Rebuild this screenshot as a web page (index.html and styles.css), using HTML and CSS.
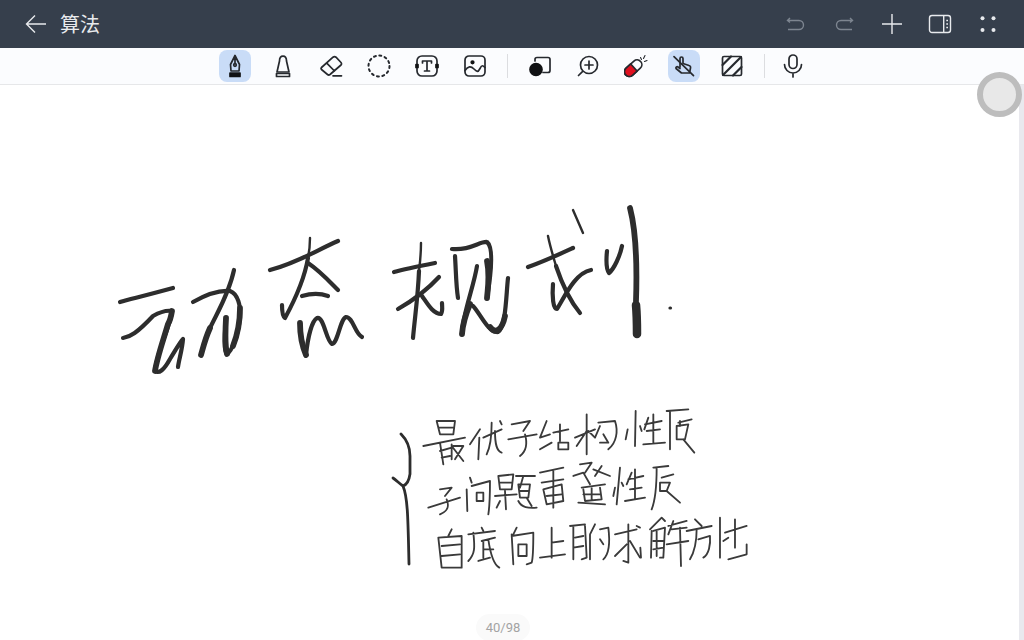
FILE: index.html
```html
<!DOCTYPE html>
<html lang="zh-CN">
<head>
<meta charset="utf-8">
<title>算法</title>
<link rel="stylesheet" href="styles.css">
</head>
<body>
<div class="app">
  <header class="topbar">
    <div class="top-left">
      <svg class="ic" viewBox="0 0 24 24"><path d="M3 12H22M11 3.500 2.500 12 11 20.500"/></svg>
      <span class="title">算法</span>
    </div>
    <div class="top-right">
      <svg class="ic dim" viewBox="0 0 24 24"><path d="M3.500 8.500H15a4.500 4.500 0 0 1 0 9H4M6 6 3.500 8.500 6 10.500"/></svg>
      <svg class="ic dim" viewBox="0 0 24 24"><path d="M20.500 8.500H9a4.500 4.500 0 0 0 0 9h11M18 6l2.500 2.500L18 10.500"/></svg>
      <svg class="ic" viewBox="0 0 24 24"><path d="M12 2V22M2 12H22"/></svg>
      <svg class="ic" viewBox="0 0 24 24"><rect x="1.500" y="3.500" width="21" height="17" rx="2.500"/><path d="M15.700 3.500V20.500M18.300 8.500H20M18.300 12H20M18.300 15.500H20"/></svg>
      <svg class="ic fill" viewBox="0 0 24 24"><circle cx="6.500" cy="6.300" r="2"/><circle cx="17.500" cy="6.300" r="2"/><circle cx="6.500" cy="18" r="2"/><circle cx="17.500" cy="18" r="2"/></svg>
    </div>
  </header>

  <nav class="toolbar">
    <span class="tool on"><svg class="ti" viewBox="0 0 24 24"><path d="M12 1.500 16.500 10.500 16 17H8L7.500 10.500ZM12 3V9"/><circle cx="12" cy="11" r="1.300"/><rect class="solid" x="7" y="19" width="10" height="3.500"/></svg></span>
    <span class="tool"><svg class="ti" viewBox="0 0 24 24"><path d="M8.500 7C8.500 .5 15.500 .5 15.500 7L18 18H6Z"/><path d="M5.500 19.500H18.500V22.500H5.500Z"/></svg></span>
    <span class="tool"><svg class="ti" viewBox="0 0 24 24"><path d="M2.500 13.500 14 3.200A2.500 2.500 0 0 1 17 3.200L22 8.500A2 2 0 0 1 22 11L11 20.500A2 2 0 0 1 8.500 20.500L2.500 15.500A1.500 1.500 0 0 1 2.500 13.500ZM7.500 8.800 15.500 17M14 21.800H22.500"/></svg></span>
    <span class="tool"><svg class="ti dotted" viewBox="0 0 24 24"><circle cx="12" cy="12" r="10.500"/></svg></span>
    <span class="tool"><svg class="ti" viewBox="0 0 24 24"><rect x="2" y="2" width="20" height="20" rx="5"/><path d="M7.500 9V7H16.500V9M12 7V17M9.500 17H14.500"/><path class="solid" d="M1 10.500H3V13.500H1ZM21 10.500H23V13.500H21Z"/></svg></span>
    <span class="tool"><svg class="ti" viewBox="0 0 24 24"><rect x="2" y="2" width="20" height="20" rx="4"/><circle class="solid" cx="9.500" cy="8.300" r="1.300"/><path d="M2 16.500C5 12 8 12 11 15S15 18.500 17 14.500 20 11.500 22 13.500"/></svg></span>
    <span class="sep"></span>
    <span class="tool"><svg class="ti" viewBox="0 0 24 24"><path d="M7 7V5.500A2 2 0 0 1 9 3.500H20A2 2 0 0 1 22 5.500V16.500A2 2 0 0 1 20 18.500H15"/><circle class="solid" cx="8" cy="15.500" r="6"/></svg></span>
    <span class="tool"><svg class="ti" viewBox="0 0 24 24"><circle cx="13" cy="11" r="8.500"/><path d="M13 7V15M9 11H17M6.700 17.300 2.500 21.500"/></svg></span>
    <span class="tool"><svg class="ti" viewBox="0 0 24 24"><g transform="rotate(-42 9 14)"><rect x="-1" y="9.500" width="20" height="9.500" rx="4.700"/><path class="red" d="M10 9.500H3.700A4.700 4.700 0 0 0 3.700 19H10Z"/></g><path class="thin" d="M16.500 3.500 17.500 5.500M21 1.500 19.500 4.500M23 6.500 20.500 7.500"/></svg></span>
    <span class="tool on"><svg class="ti" viewBox="0 0 24 24"><path d="M8 13V4.500A1.500 1.500 0 0 1 11 4.500V9.500L17 11.500A2 2 0 0 1 18.500 14L17.500 19H9.500L4 14.500A1.300 1.300 0 0 1 6 13L8 14.500"/><path d="M2 2.700 21.500 21.700"/></svg></span>
    <span class="tool"><svg class="ti" viewBox="0 0 24 24"><rect x="2.500" y="2.500" width="19" height="19" rx="1.500"/><path class="hatch" d="M2.500 11 11 2.500M3 21 21 3M13 21.500 21.500 13"/></svg></span>
    <span class="sep"></span>
    <span class="mic"><svg class="ti" viewBox="0 0 24 24"><rect x="8" y="1" width="8" height="13.500" rx="4"/><path d="M3.500 10.500A8.500 8.500 0 0 0 20.500 10.500M12 19V23"/></svg></span>
  </nav>

  <main class="canvas">
    <svg class="ink" viewBox="0 84 1024 556" role="img" aria-label="动态规划 手写笔记">
      <g class="big">
        <path d="M120 301C130 298 140 296 173 287"/>
        <path d="M123 337C130 336 137 332 153 315 160 311 166 309 172 310 171 323 157 350 155 370 159 373 164 369 170 358 175 350 180 341 183 338 182 350 179 358 178 366"/>
        <path d="M193 301C207 293 220 289 230 290 238 293 241 305 240 317 238 335 232 350 227 353 223 350 225 330 226 317"/>
        <path d="M234 269C229 293 217 312 210 327 205 338 203 347 201 354"/>
        <path d="M270 269C297 262 315 250 338 240"/>
        <path class="fine" d="M310 237C310 245 309 252 308 257"/>
        <path d="M308 257C305 275 297 295 285 317 282 315 282 309 282 304"/>
        <path d="M308 262C320 270 330 281 338 289"/>
        <path d="M302 295C312 292 320 292 328 295"/>
        <path d="M300 322C300 335 303 347 306 354 308 335 312 320 317 317 324 315 326 340 332 343 338 342 340 318 346 316 353 316 355 333 362 336"/>
        <path d="M394 271C405 268 420 265 435 262"/>
        <path class="fine" d="M421 242C421 252 420 262 419 270"/>
        <path d="M419 270C418 295 415 315 413 337"/>
        <path d="M398 308C412 300 428 288 439 276"/>
        <path d="M422 295C427 302 433 313 441 313 443 310 442 305 442 302"/>
        <path d="M452 248C470 250 480 240 487 241 492 245 493 262 487 297"/>
        <path d="M455 255C456 270 456 285 458 297"/>
        <path d="M477 265C474 285 462 315 462 333"/>
        <path d="M473 305C480 312 488 332 498 331 506 326 506 295 508 277"/>
        <path class="fine" d="M573 209 583 232"/>
        <path d="M528 266C545 260 560 253 573 247"/>
        <path class="fine" d="M548 235C550 245 553 255 556 265"/>
        <path d="M556 265C561 280 570 300 580 312"/>
        <path d="M591 269C575 272 565 295 557 308 553 308 552 295 553 283"/>
        <path d="M607 250C606 260 606 268 609 272 614 268 620 255 622 245"/>
        <path class="mid" d="M630 207C636 230 637 270 636 300"/>
        <path class="heavy" d="M636 304C637 315 637 325 637 333"/>
        <path class="mid" d="M168 323C163 340 157 357 155 370M226 317C225 335 225 345 227 353M210 327C205 338 203 347 201 354M240 307C240 320 237 335 233 345M300 322C300 335 303 347 306 354M487 260C490 275 488 285 487 297M462 333C463 320 467 310 470 303M490 326C495 333 502 330 505 315M172 310C171 316 170 320 168 323"/>
        <path class="dot" d="M670 307H670.500"/>
      </g>
      <path class="brace" d="M401 433C408 440 410 447 410 455V473C409 480 406 484 403 485 400 483 396 479 393 477M403 485C408 497 408 520 409 563"/>
      <g class="small" transform="translate(380 400) scale(.3333)">
        <path d="M170 60H225L220 100H180ZM175 80H222M130 135 255 110M180 125 190 190M180 150 215 140M185 170 210 165M215 130V175M220 135H250L225 175M215 135 250 180"/>
        <path d="M300 85 270 130M298 110 295 175M310 110 365 85M335 65C335 110 330 140 320 160M345 90C345 130 350 150 365 155M360 60 365 70"/>
        <path d="M395 70 450 60 430 90M385 115 470 100M435 100C442 125 440 150 420 165"/>
        <path d="M500 60 480 110 510 100M480 145 515 125M540 70V120M520 95 565 85M535 125H565V145H535Z"/>
        <path d="M270 230 275 245M260 265 262 330M275 255 330 240C330 270 330 310 325 340M290 275H310V300H290Z"/>
        <path d="M180 265 215 260 195 285M145 320 240 290M200 295C208 315 205 330 180 340"/>
        <path d="M355 225 400 220 395 265H360ZM358 245H397M345 285 410 280M375 270 378 325M360 300 350 320M408 225H465M430 225 420 260M415 250H450L445 290H420ZM418 270H448M415 300C425 320 445 322 470 320M440 290 455 315"/>
        <path d="M480 215 550 200M485 245 550 235M490 265 545 250 550 300 500 310ZM520 210V320M500 285 545 280"/>
        <path d="M215 385 205 405M175 410 245 405V500H185ZM185 435 240 430M185 465 240 460"/>
        <path d="M305 380 310 390M265 400 345 390M280 395C285 440 285 460 265 480M305 420 345 410M310 420V470M310 445H340M325 415C330 450 340 490 358 500M295 480 330 470"/>
        <path d="M410 380 400 400M395 400 400 490M395 405 460 395C460 430 460 470 455 485L440 490M415 430H440V465H415Z"/>
        <path d="M515 380V470M515 425 550 420M480 470 555 460"/>
      </g>
      <g class="small" transform="translate(565 400) scale(.3333)">
        <path d="M30 110 90 85M65 40V160M65 90 35 135M70 90 90 110M105 75 90 110M100 65 150 60C160 90 155 125 130 145M105 125H130L115 100"/>
        <path d="M212 30 210 135M188 85 182 115M225 75 230 90M250 50 238 85M240 70 290 60M265 40V125M245 90 285 85M235 130 300 125"/>
        <path d="M305 30 370 25M315 30V145M340 65 380 55M335 75 370 70 360 115H335ZM345 60V75M355 115 388 155"/>
        <path d="M45 190 80 185 60 215M25 225 55 215 75 250M110 195 90 225M85 205 135 225M50 260 120 250M55 265 60 300 110 295 105 260M80 260V295M55 280H105M40 305 120 310"/>
        <path d="M165 200 155 310M150 260 145 285M170 245 175 255M200 215 185 250M190 235 235 225M210 205V295M195 265 230 260M180 300 240 290"/>
        <path d="M265 200 310 195M275 200C275 250 270 300 260 325M290 230 325 220M285 245H315L305 270H285ZM305 270 345 305"/>
        <path d="M15 375 60 370M25 375V475M30 410 55 405M25 440 55 435M60 375 65 470 50 475M90 370 75 400M75 400V475M105 385 130 380C135 420 132 460 115 475M105 415 115 430"/>
        <path d="M150 400 215 385M190 370V485L175 480M150 465 185 430M215 375 225 380M195 420 225 470M226 440 228 470"/>
        <path d="M255 385 290 350 300 360M260 390 258 470M265 390 300 380 295 470H285M265 420H295M265 445 295 440M275 390V465M310 375 365 360M325 360 310 400M320 385 365 380M305 430 370 420M345 380 348 495"/>
        <path d="M390 355 410 375M365 390 440 375M395 385C395 420 390 450 375 475M400 415 435 405C437 430 432 460 415 470"/>
        <path d="M465 350V470M490 410 475 420M480 395 545 375M510 355V440M490 475 545 460 545 430"/>
      </g>
    </svg>
    <span class="scrollbar"></span>
    <span class="thumb"></span>
    <span class="pager">40/98</span>
  </main>
</div>
</body>
</html>
```

FILE: styles.css
```css
* { box-sizing: border-box; }
html, body { margin: 0; height: 100%; overflow: hidden; background: #fff; }
.app { width: 1024px; height: 640px; position: relative; display: flex; flex-direction: column; font-family: "Noto Sans CJK SC", "Noto Sans", sans-serif; }

.topbar { height: 48px; flex: none; background: #363f4c; display: flex; align-items: center; justify-content: space-between; padding: 0 24px; color: #e8eaed; }
.top-left { display: flex; align-items: center; gap: 12px; }
.top-right { display: flex; align-items: center; gap: 24px; }
.title { font-size: 20px; line-height: 24px; font-weight: 400; }
.ic { width: 24px; height: 24px; fill: none; stroke: #e8eaed; stroke-width: 1.4; display: block; }
.ic.dim { stroke: #7d8590; }
.ic.fill { fill: #e8eaed; stroke: none; }

.toolbar { height: 37px; flex: none; background: #fbfcfe; border-bottom: 1px solid #e6e7e9; display: flex; align-items: center; justify-content: center; gap: 16px; padding-bottom: 1px; }
.tool { width: 32px; height: 32px; border-radius: 8px; display: flex; align-items: center; justify-content: center; }
.tool.on { background: #c9dcf7; }
.mic { width: 24px; height: 24px; display: block; }
.sep { width: 1px; height: 24px; background: #dcdde0; }
.ti { width: 24px; height: 24px; display: block; fill: none; stroke: #26292e; stroke-width: 1.7; stroke-linecap: round; stroke-linejoin: round; }
.ti .solid { fill: #111214; stroke: #111214; }
.ti .red { fill: #e0101f; stroke: #26292e; }
.ti .thin { stroke-width: 1.1; }
.ti .hatch { stroke-width: 2.200; }
.ti.dotted { stroke-width: 2; stroke-dasharray: 2 3.500; }

.canvas { flex: 1; position: relative; background: #fff; overflow: hidden; }
.ink { width: 1024px; height: 556px; display: block; fill: none; stroke: #2d2d2d; stroke-linecap: round; stroke-linejoin: round; filter: blur(.4px); }
.big { stroke-width: 4.200; }
.fine { stroke-width: 2.400; }
.mid { stroke-width: 5.800; }
.heavy { stroke-width: 8.500; }
.dot { stroke-width: 3.200; }
.brace { stroke-width: 2.800; }
.small { stroke-width: 5.500; stroke: #3a3a3a; }

.scrollbar { position: absolute; right: 0; top: 0; bottom: 0; width: 5px; background: #e9e9ee; }
.thumb { position: absolute; z-index: 2; left: 977px; top: -13px; width: 45px; height: 45px; border-radius: 50%; background: #e8e8e8; border: 6px solid #bdbdbd; }
.canvas { overflow: visible; }
.pager { position: absolute; left: 476px; bottom: 0; height: 27px; width: 54px; border-radius: 14px; background: #fafafa; color: #a3a3a3; font: 13px/27px Roboto, sans-serif; text-align: center; }
```
